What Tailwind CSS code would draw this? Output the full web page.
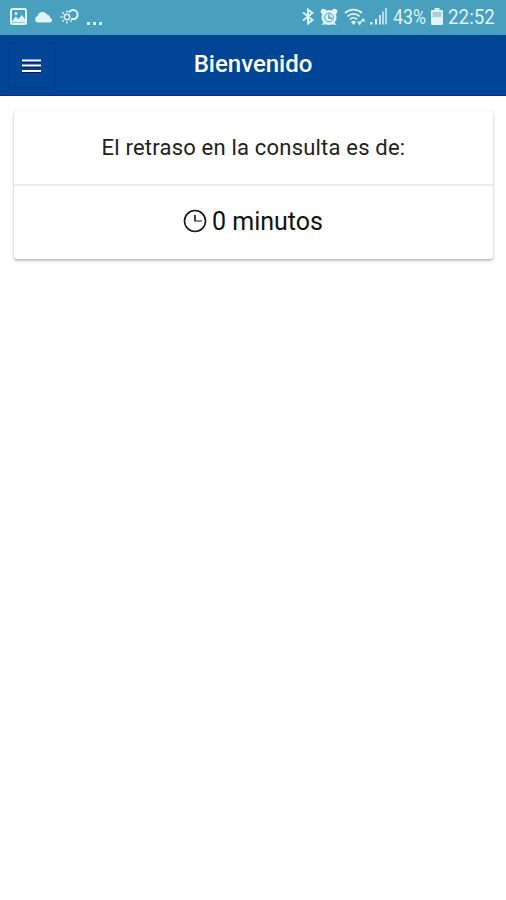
<!DOCTYPE html>
<html lang="es">
<head>
    <meta charset="UTF-8">
    <meta name="viewport" content="width=device-width, initial-scale=1.0">
    <title>Bienvenido</title>
    <script src="https://cdn.jsdelivr.net/npm/@tailwindcss/browser@4"></script>
</head>
<body class="bg-white min-h-screen overflow-hidden font-[Roboto,sans-serif]">

    <!-- Status bar -->
    <div class="flex items-center justify-between h-[35px] pl-[10px] pr-[10px] pb-[2px] bg-[#489fbe] text-[#dff3fa]">
        <div class="flex items-center">
            <svg class="w-[17px] h-[17px]" viewBox="0 0 17 17" fill="none" stroke="currentColor">
                <rect x="1" y="1" width="15" height="15" rx="1.5" stroke-width="2"/>
                <path d="M2 13.500 5.500 8.500l3 2.500L12 7l3.500 5v2.500H2z" fill="currentColor" stroke="none"/>
                <circle cx="6" cy="5.500" r="1.500" fill="currentColor" stroke="none"/>
            </svg>
            <svg class="w-[18px] h-[12px] ml-[8px]" viewBox="0 0 18 12" fill="currentColor">
                <path d="M3 11.500a3.300 3.300 0 0 1-.3-6.500A5 5 0 0 1 12 3.500a3.500 3.500 0 0 1 3 3.200 2.500 2.500 0 0 1 .5 4.800z"/>
            </svg>
            <svg class="w-[20px] h-[16px] ml-[7px] -mt-[2px]" viewBox="0 0 20 16" fill="none" stroke="currentColor" stroke-width="1.500">
                <circle cx="7" cy="9" r="2.700"/>
                <path d="M7 4.500V2.500M3.800 5.800 2.400 4.400M2.500 9H.5M3.800 12.200l-1.400 1.400M7 13.500v2M10.200 12.200l1.400 1.400"/>
                <path d="M9 4.500a4.600 4.600 0 1 1 5.500 6.500h-3.500" stroke-width="2"/>
            </svg>
            <span class="flex gap-[3px] ml-[7px] pt-[13px]">
                <i class="size-[3px] bg-current"></i>
                <i class="size-[3px] bg-current"></i>
                <i class="size-[3px] bg-current"></i>
            </span>
        </div>
        <div class="flex items-center">
            <svg class="w-[12px] h-[17px]" viewBox="0 0 12 17" fill="none" stroke="currentColor" stroke-width="2">
                <path d="M1 4.500 10.500 12 6 15.500v-14L10.500 5 1 12.500"/>
            </svg>
            <svg class="w-[18px] h-[18px] ml-[6px]" viewBox="0 0 18 18">
                <g fill="currentColor">
                    <circle cx="9" cy="9.500" r="7.600"/>
                    <circle cx="3.500" cy="3.500" r="2.800"/>
                    <circle cx="14.500" cy="3.500" r="2.800"/>
                    <path d="m1.500 17 3-4 3 3zM16.500 17l-3-4-3 3z"/>
                </g>
                <circle cx="9" cy="9.500" r="4.300" fill="none" stroke="#489fbe"/>
                <path d="M9 6.500v3.500h3" fill="none" stroke="#489fbe" stroke-width="1.300"/>
            </svg>
            <svg class="w-[23px] h-[18px] ml-[6px]" viewBox="0 0 23 18" fill="none" stroke="currentColor" stroke-width="1.800">
                <path d="M1 5a12.500 12.500 0 0 1 17 0M3.500 8.300a8.800 8.800 0 0 1 12 0M6 11.300a5 5 0 0 1 7 0"/>
                <path d="m9.500 17-2.500-3a3.500 3.500 0 0 1 5 0zM13 13.500h5L15.500 17.500zM16.500 13.500h5L19 10z" fill="currentColor" stroke="none"/>
            </svg>
            <svg class="w-[17px] h-[17px] ml-[3px]" viewBox="0 0 17 17" fill="currentColor">
                <path d="M0 14h2.500v2.500H0z"/>
                <path d="M5 11h2v5.500H5z"/>
                <path d="M9 7h2v9.500H9z" opacity=".8"/>
                <path d="M12 3.500h2v13h-2zM15 0h2v16.500h-2z" opacity=".7"/>
            </svg>
            <div class="w-[34px] ml-[6px] whitespace-nowrap">
                <span class="inline-block origin-left scale-x-[.89] text-[20px] leading-[34px]">43%</span>
            </div>
            <svg class="w-[12px] h-[17px] ml-[4px]" viewBox="0 0 12 17" fill="currentColor">
                <path d="M3.500 0h5v2H11a1 1 0 0 1 1 1v13a1 1 0 0 1-1 1H1a1 1 0 0 1-1-1V3a1 1 0 0 1 1-1h2.500z"/>
                <path d="M1.500 4h9v5h-9z" fill="#a5d0df"/>
            </svg>
            <div class="w-[48px] ml-[5px] whitespace-nowrap">
                <span class="inline-block origin-left scale-x-[.94] text-[20px] leading-[34px]">22:52</span>
            </div>
        </div>
    </div>

    <!-- Toolbar -->
    <header class="grid grid-cols-[1fr_auto_1fr] items-center h-[61px] px-[8px] bg-[#004596] border-t border-b border-t-[#00419c] border-b-[#00318c]">
        <button class="flex items-center justify-center w-[48px] h-[47px] rounded-[3px] border-2 border-[#003f8d]" aria-label="Menú">
            <svg class="w-[20px] h-[14px] -ml-[1px]" viewBox="0 0 20 14">
                <path d="M0 3h19M0 8h19M0 13.500h19" stroke="#00107e" stroke-width="1.500"/>
                <path d="M0 1.500h19M0 6.500h19M0 12h19" stroke="#fff" stroke-width="2"/>
            </svg>
        </button>
        <h1 class="text-white text-[24px] font-medium leading-[30px] pb-[3px]">Bienvenido</h1>
        <div></div>
    </header>

    <!-- Delay card -->
    <main class="pl-[14px] pr-[13px] pt-[15px]">
        <div class="h-[148px] bg-white rounded-[3px] text-center shadow-[0_2px_3px_rgba(0,0,0,0.25),0_0_1px_rgba(0,0,0,0.2)]">
            <div class="flex items-center justify-center h-[75px] border-b-2 border-[#ebebeb]">
                <p class="text-[22px] text-[#222] tracking-[.2px]">El retraso en la consulta es de:</p>
            </div>
            <div class="flex items-center justify-center h-[71px] gap-[5px] pr-[1px]">
                <svg class="w-[24px] h-[24px] -mt-[2px]" viewBox="0 0 24 24" fill="none" stroke="#151515">
                    <circle cx="12" cy="12" r="10.500" stroke-width="1.600"/>
                    <path d="M12 6v6" stroke-width="1.600"/>
                    <path d="M11.200 12H19" stroke-width="1.400" stroke="#555"/>
                </svg>
                <p class="text-[25px] text-[#111]">0 minutos</p>
            </div>
        </div>
    </main>

</body>
</html>
